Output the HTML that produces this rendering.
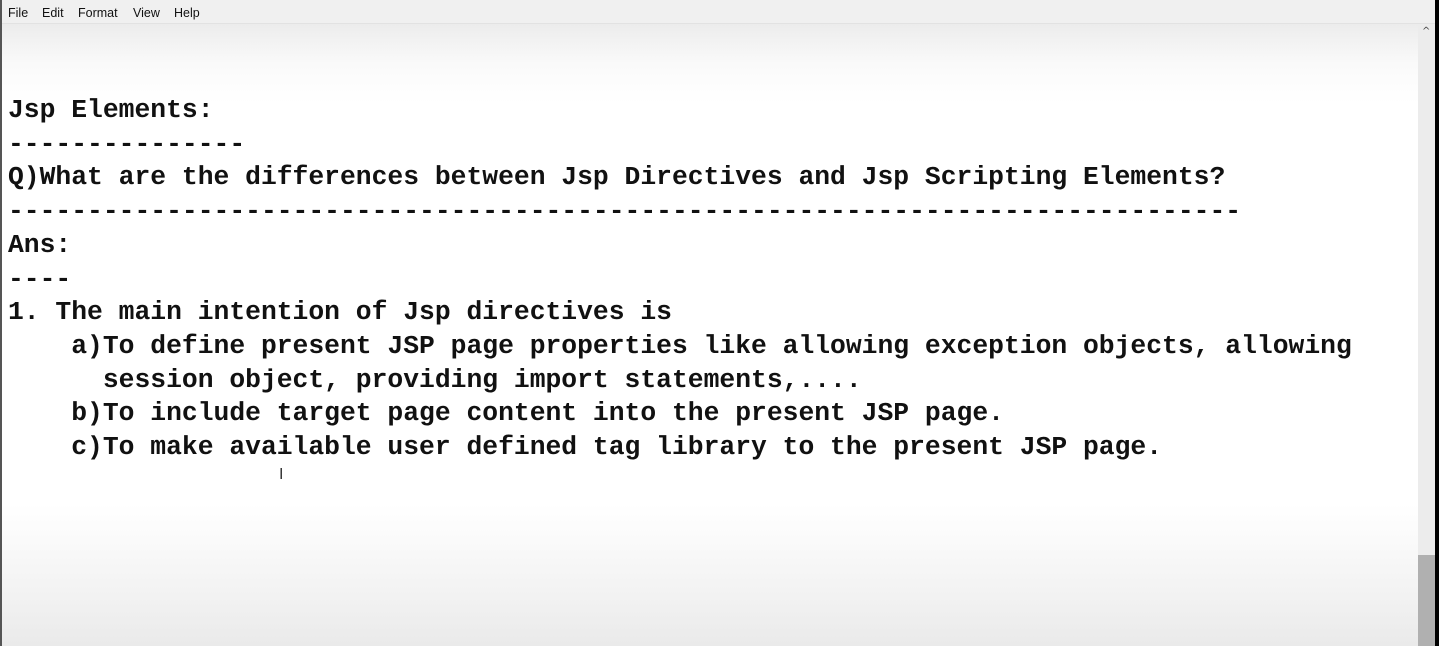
<!DOCTYPE html>
<html><head><style>
html,body{margin:0;padding:0;width:1439px;height:646px;overflow:hidden;background:#fff;}
.menu{position:absolute;left:0;top:0;width:1435px;height:23px;background:#f0f0f0;border-bottom:1px solid #e2e2e2;font:12.5px "Liberation Sans",sans-serif;color:#111;}
.menu span{position:absolute;top:6px;}
.edit{position:absolute;left:2px;top:24px;width:1416px;height:622px;background:linear-gradient(#ececec 0px,#fafafa 40px,#fff 80px,#fff 480px,#f4f4f4 560px,#e6e6e6 646px);}
.lb{position:absolute;left:0;top:0;width:2px;height:646px;background:#555;}
pre{position:absolute;left:8px;top:94px;margin:0;font:bold 26.35px/33.7px "Liberation Mono",monospace;color:#111;}
.sb{position:absolute;left:1418px;top:24px;width:17px;height:622px;background:#ececec;}
.th{position:absolute;left:1418px;top:555px;width:17px;height:91px;background:#b0b0b0;}
.blk{position:absolute;left:1435px;top:0;width:4px;height:646px;background:#000;}
</style></head><body>
<div class="menu"><span style="left:8px">File</span><span style="left:42px">Edit</span><span style="left:78px">Format</span><span style="left:133px">View</span><span style="left:174px">Help</span></div>
<div class="edit"></div>
<div class="lb"></div>
<pre>Jsp Elements:
---------------
Q)What are the differences between Jsp Directives and Jsp Scripting Elements?
------------------------------------------------------------------------------
Ans:
----
1. The main intention of Jsp directives is
    a)To define present JSP page properties like allowing exception objects, allowing
      session object, providing import statements,....
    b)To include target page content into the present JSP page.
    c)To make available user defined tag library to the present JSP page.</pre>
<div style="position:absolute;left:279px;top:466px;font:16px 'Liberation Sans',sans-serif;color:#333">I</div>
<div class="sb"></div>
<div style="position:absolute;left:1422px;top:26px;font:10px 'DejaVu Sans',sans-serif;color:#444">^</div>
<div class="th"></div>
<div class="blk"></div>
</body></html>
